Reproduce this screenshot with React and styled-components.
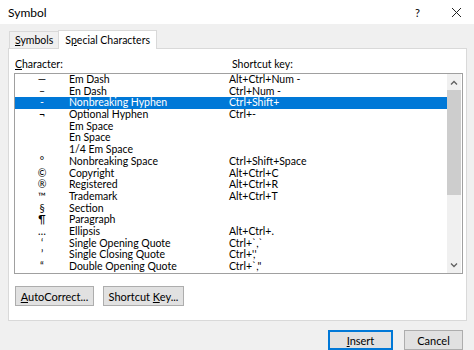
import styled, { createGlobalStyle } from "styled-components";

const GlobalStyle = createGlobalStyle`
  body {
    margin: 0;
    background: #f0f0f0;
    font-family: Lato, "Noto Sans", sans-serif;
    font-size: 10.5px;
    color: #000000;
  }
`;

const rows = [
  { glyph: "—", name: "Em Dash", key: "Alt+Ctrl+Num -" },
  { glyph: "–", name: "En Dash", key: "Ctrl+Num -" },
  { glyph: "-", name: "Nonbreaking Hyphen", key: "Ctrl+Shift+" },
  { glyph: "¬", name: "Optional Hyphen", key: "Ctrl+-" },
  { glyph: "", name: "Em Space", key: "" },
  { glyph: "", name: "En Space", key: "" },
  { glyph: "", name: "1/4 Em Space", key: "" },
  { glyph: "°", name: "Nonbreaking Space", key: "Ctrl+Shift+Space" },
  { glyph: "©", name: "Copyright", key: "Alt+Ctrl+C" },
  { glyph: "®", name: "Registered", key: "Alt+Ctrl+R" },
  { glyph: "™", name: "Trademark", key: "Alt+Ctrl+T" },
  { glyph: "§", name: "Section", key: "" },
  { glyph: "¶", name: "Paragraph", key: "" },
  { glyph: "…", name: "Ellipsis", key: "Alt+Ctrl+." },
  { glyph: "‘", name: "Single Opening Quote", key: "Ctrl+`,`" },
  { glyph: "’", name: "Single Closing Quote", key: "Ctrl+','" },
  { glyph: "“", name: "Double Opening Quote", key: "Ctrl+`,\"" },
];

export default function App() {
  return (
    <>
      <GlobalStyle />
      <Dialog>
        <TitleBar>
          <Title>Symbol</Title>
          <TitleButtons>
            <span>?</span>
            <svg width="11" height="11" viewBox="0 0 11 11">
              <path d="M1 1L10 10M10 1L1 10" stroke="#222" strokeWidth="1" />
            </svg>
          </TitleButtons>
        </TitleBar>

        <Body>
          <Tabs>
            <Tab>
              <span>
                <u>S</u>ymbols
              </span>
            </Tab>
            <Tab $active>
              <span>
                S<u>p</u>ecial Characters
              </span>
            </Tab>
          </Tabs>

          <Panel>
            <Labels>
              <CharLabel>
                <u>C</u>haracter:
              </CharLabel>
              <span>Shortcut key:</span>
            </Labels>

            <ListBox>
              <List>
                {rows.map((r, i) => (
                  <Row key={i} $selected={i === 2}>
                    <Glyph>{r.glyph}</Glyph>
                    <Name>{r.name}</Name>
                    <Key>{r.key}</Key>
                  </Row>
                ))}
              </List>
              <Scrollbar>
                <Arrow>
                  <svg width="8" height="5" viewBox="0 0 8 5">
                    <path d="M1 4.5L4 1.5L7 4.5" stroke="#606060" strokeWidth="1.3" fill="none" />
                  </svg>
                </Arrow>
                <Track>
                  <Thumb />
                </Track>
                <Arrow>
                  <svg width="8" height="5" viewBox="0 0 8 5">
                    <path d="M1 0.5L4 3.5L7 0.5" stroke="#606060" strokeWidth="1.3" fill="none" />
                  </svg>
                </Arrow>
              </Scrollbar>
            </ListBox>

            <PanelButtons>
              <Button $w={79}>
                <span>
                  <u>A</u>utoCorrect...
                </span>
              </Button>
              <Button $w={81}>
                <span>
                  Shortcut <u>K</u>ey...
                </span>
              </Button>
            </PanelButtons>
          </Panel>
        </Body>

        <Footer>
          <Button $w={65} $default>
            <span>
              <u>I</u>nsert
            </span>
          </Button>
          <Button $w={59}>
            <span>Cancel</span>
          </Button>
        </Footer>
      </Dialog>
    </>
  );
}

const Dialog = styled.div`
  width: 474px;
  height: 350px;
  display: flex;
  flex-direction: column;
  overflow: hidden;
`;

const TitleBar = styled.div`
  height: 26px;
  background: #ffffff;
  display: flex;
  align-items: center;
  justify-content: space-between;
  padding: 0 12px 0 8px;
  font-size: 12px;
`;

const Title = styled.span`
  color: #000;
`;

const TitleButtons = styled.div`
  display: flex;
  align-items: center;
  gap: 31px;

  span {
    font-size: 11px;
  }
`;

const Body = styled.div`
  padding: 7px 7px 0 8px;
`;

const Tabs = styled.div`
  display: flex;
  align-items: flex-end;
  height: 17px;
  margin-left: 1px;
`;

const Tab = styled.div`
  height: ${(p) => (p.$active ? "18px" : "16px")};
  padding: 0 ${(p) => (p.$active ? "6px" : "5px")};
  background: ${(p) => (p.$active ? "#ffffff" : "#f0f0f0")};
  border: 1px solid #d9d9d9;
  border-bottom: none;
  margin-bottom: ${(p) => (p.$active ? "-1px" : "0")};
  margin-right: ${(p) => (p.$active ? "0" : "-1px")};
  display: flex;
  align-items: center;
  position: relative;
  z-index: ${(p) => (p.$active ? 1 : 0)};
`;

const Panel = styled.div`
  height: 263px;
  background: #ffffff;
  border: 1px solid #d9d9d9;
  padding: 8px 3px 0 5px;
  display: flex;
  flex-direction: column;
`;

const Labels = styled.div`
  display: flex;
  height: 14px;
  line-height: 14px;
  padding-left: 1px;
`;

const CharLabel = styled.span`
  width: 217px;
`;

const ListBox = styled.div`
  margin-top: 2px;
  height: 199px;
  border: 1px solid #a0a0a0;
  display: flex;
`;

const List = styled.div`
  flex: 1;
  display: flex;
  flex-direction: column;
`;

const Row = styled.div`
  height: 11.7px;
  line-height: 11.7px;
  display: flex;
  align-items: center;
  white-space: nowrap;
  overflow: hidden;
  background: ${(p) => (p.$selected ? "#0078d7" : "transparent")};
  color: ${(p) => (p.$selected ? "#ffffff" : "#000000")};
`;

const Glyph = styled.span`
  width: 54px;
  text-align: center;
`;

const Name = styled.span`
  width: 160px;
`;

const Key = styled.span`
  flex: 1;
`;

const Scrollbar = styled.div`
  width: 14px;
  margin-right: 1px;
  background: #f0f0f0;
  display: flex;
  flex-direction: column;
`;

const Arrow = styled.div`
  height: 16px;
  display: flex;
  align-items: center;
  justify-content: center;
`;

const Track = styled.div`
  flex: 1;
`;

const Thumb = styled.div`
  height: 105px;
  background: #cdcdcd;
`;

const PanelButtons = styled.div`
  display: flex;
  gap: 9px;
  margin-top: 12px;
  padding-left: 1px;
`;

const Button = styled.div`
  width: ${(p) => p.$w}px;
  height: 20px;
  box-sizing: border-box;
  display: flex;
  align-items: center;
  justify-content: center;
  background: #e1e1e1;
  border: ${(p) => (p.$default ? "2px solid #0078d7" : "1px solid #adadad")};
  font-size: 11px;
`;

const Footer = styled.div`
  display: flex;
  justify-content: flex-end;
  gap: 11px;
  padding: 9px 11px 0 0;
`;
